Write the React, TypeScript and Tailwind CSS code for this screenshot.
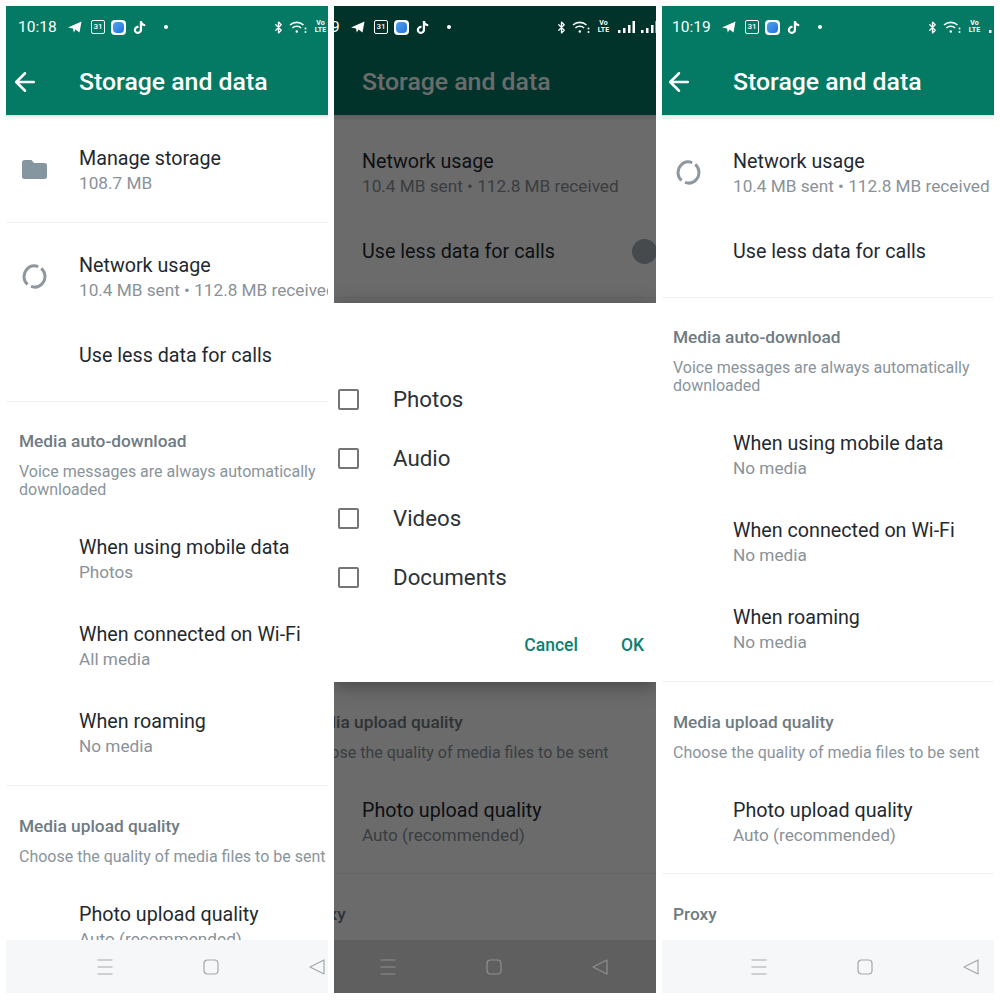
import { ArrowLeft, Bluetooth } from 'lucide-react';
import { FaTiktok } from 'react-icons/fa';

/* ------------------------------------------------------------------ */
/*  Status bar                                                         */
/* ------------------------------------------------------------------ */

function SignalBars() {
  return (
    <svg width="17" height="14" viewBox="0 0 17 14" fill="white">
      <rect x="0" y="10" width="2.5" height="3" />
      <rect x="5" y="8" width="2.5" height="5" />
      <rect x="10" y="5" width="2.5" height="8" />
      <rect x="14.5" y="1" width="2.5" height="12" />
    </svg>
  );
}

function StatusBar({ time }: { time: string }) {
  return (
    <div className="relative z-20 flex h-[42px] w-[406px] items-center pl-[10px] text-white">
      <span className="mt-[1px] w-[39px] text-[15.500px]">{time}</span>
      <svg className="ml-[11px]" width="14" height="12" viewBox="0 0 14 12" fill="white">
        <path d="M0 6.500 13.500 0.500 11.500 11.500 7.500 8.600 5.800 11.500 5 7.600 Z" />
      </svg>
      <div className="ml-[9px] flex h-[14px] w-[14px] items-center justify-center rounded-[2px] border border-white text-[8px] font-medium leading-none">
        31
      </div>
      <div className="ml-[6px] flex h-[15px] w-[15px] items-center justify-center rounded-[4px] bg-white">
        <div className="h-[11px] w-[11px] rounded-[4px] bg-linear-to-br from-[#4da3f0] to-[#2a6fe0]" />
      </div>
      <FaTiktok className="ml-[7px]" size={13} color="white" />
      <div className="ml-[18px] h-[4px] w-[4px] rounded-full bg-white" />
      <Bluetooth className="ml-[104px]" size={13} strokeWidth={2.4} />
      <svg className="ml-[4px]" width="18" height="14" viewBox="0 0 18 14" fill="none" stroke="white" strokeWidth="1.600">
        <path d="M1 5a10 10 0 0 1 13.500 0" />
        <path d="M3.400 8a6.400 6.400 0 0 1 8.700 0" />
        <circle cx="7.800" cy="11.500" r="1.200" fill="white" stroke="none" />
        <circle cx="16.500" cy="12" r="1" fill="white" stroke="none" />
        <circle cx="16.500" cy="8.500" r="1" fill="white" stroke="none" />
      </svg>
      <div className="ml-[6px] flex w-[15px] flex-col items-center text-[7px] font-bold leading-[7px]">
        <span>Vo</span>
        <span>LTE</span>
      </div>
      <div className="ml-[7px]">
        <SignalBars />
      </div>
      <div className="ml-[6px]">
        <SignalBars />
      </div>
    </div>
  );
}

/* ------------------------------------------------------------------ */
/*  List                                                               */
/* ------------------------------------------------------------------ */

function FolderIcon() {
  return (
    <svg width="25" height="21" viewBox="0 0 25 21" fill="#8696a0">
      <path d="M2.500 1h7l2.500 3h10.500a2.500 2.500 0 0 1 2.500 2.500v11a2.500 2.500 0 0 1-2.500 2.500h-20a2.500 2.500 0 0 1-2.500-2.500v-14a2.500 2.500 0 0 1 2.500-2.500z" />
    </svg>
  );
}

function UsageIcon() {
  return (
    <svg width="25" height="25" viewBox="0 0 25 25" fill="none" stroke="#8e979d" strokeWidth="3">
      <circle cx="12.500" cy="12.500" r="10.500" strokeDasharray="29 4" transform="rotate(-50 12.500 12.500)" />
    </svg>
  );
}

function Row({ title, sub, icon }: { title: string; sub: string; icon?: React.ReactNode }) {
  return (
    <div className="flex h-[87px] items-center">
      <div className="flex w-[71px] justify-center pb-[3px] pr-[18px]">{icon}</div>
      <div className="flex flex-col whitespace-nowrap">
        <span className="text-[19.700px] leading-[25px] text-[#1f2a30]">{title}</span>
        <span className="text-[17.200px] leading-[25px] text-[#8a9298]">{sub}</span>
      </div>
    </div>
  );
}

function Divider({ className }: { className: string }) {
  return <div className={`-ml-[10px] h-px bg-[#f0f1f2] ${className}`} />;
}

function SectionHead({ title, note }: { title: string; note: string }) {
  return (
    <div className="pl-[11px]">
      <div className="text-[17.300px] font-medium leading-[24px] text-[#6f7b82]">{title}</div>
      <div className="mt-[10px] w-[310px] text-[16px] leading-[18px] text-[#8a949b]">{note}</div>
    </div>
  );
}

function SettingsList({ scrollClass, media }: { scrollClass: string; media: string[] }) {
  return (
    <div className={scrollClass}>
      <div className="mt-[12px]">
        <Row title="Manage storage" sub="108.7 MB" icon={<FolderIcon />} />
      </div>
      <Divider className="mt-[8px]" />
      <div className="mt-[11px]">
        <Row title="Network usage" sub="10.4 MB sent • 112.8 MB received" icon={<UsageIcon />} />
      </div>
      <div className="flex h-[68px] items-center justify-between pl-[71px] pr-[40px]">
        <span className="mt-[1px] text-[19.700px] leading-[25px] text-[#1f2a30]">Use less data for calls</span>
        <div className="h-[25px] w-[25px] rounded-full bg-[#a9b0b8]" />
      </div>
      <Divider className="mt-[12px]" />

      <div className="mt-[27px]">
        <SectionHead title="Media auto-download" note="Voice messages are always automatically downloaded" />
      </div>
      <div className="mt-[17px]">
        <Row title="When using mobile data" sub={media[0]} />
        <Row title="When connected on Wi-Fi" sub={media[1]} />
        <Row title="When roaming" sub={media[2]} />
      </div>
      <Divider className="mt-[8px]" />

      <div className="mt-[28px]">
        <SectionHead title="Media upload quality" note="Choose the quality of media files to be sent" />
      </div>
      <div className="mt-[17px]">
        <Row title="Photo upload quality" sub="Auto (recommended)" />
      </div>
      <Divider className="mt-[7px]" />

      <div className="mt-[28px] pl-[11px] text-[17.300px] font-medium leading-[24px] text-[#6f7b82]">Proxy</div>
    </div>
  );
}

/* ------------------------------------------------------------------ */
/*  Screen                                                             */
/* ------------------------------------------------------------------ */

function NavBar({ dimmed }: { dimmed?: boolean }) {
  const stroke = dimmed ? '#8f8f8f' : '#a4a7ab';
  return (
    <div
      className={`-ml-[10px] flex h-[53px] w-[416px] shrink-0 items-center gap-[90px] pl-[99px] ${
        dimmed ? 'bg-[#e2e3e5]' : 'bg-[#f6f7f9]'
      }`}
    >
      <svg className="relative z-20" width="16" height="16" viewBox="0 0 16 16" stroke={stroke} strokeWidth="1.200">
        <path d="M0.500 1h15M0.500 8h15M0.500 15h15" />
      </svg>
      <svg className="relative z-20" width="16" height="16" viewBox="0 0 16 16" fill="none" stroke={stroke} strokeWidth="1.200">
        <rect x="1" y="1" width="14" height="14" rx="3.500" />
      </svg>
      <svg className="relative z-20" width="16" height="16" viewBox="0 0 16 16" fill="none" stroke={stroke} strokeWidth="1.200">
        <path d="M1 8 15 1v14z" strokeLinejoin="round" />
      </svg>
    </div>
  );
}

function Dialog() {
  const options = ['Photos', 'Audio', 'Videos', 'Documents'];
  return (
    <div className="absolute inset-x-0 top-[297px] z-30 h-[379px] bg-white pt-[67px] shadow-[0_4px_18px_rgba(0,0,0,0.35)]">
      {options.map((label) => (
        <div key={label} className="flex h-[59.300px] items-center pl-[4px]">
          <div className="h-[21px] w-[21px] rounded-[2px] border-2 border-[#757575]" />
          <span className="ml-[34px] text-[22.300px] text-[#2b3338]">{label}</span>
        </div>
      ))}
      <div className="mt-[26px] flex justify-end gap-[43px] pr-[12px] text-[17.500px] font-medium leading-[24px] text-[#0b8170]">
        <span>Cancel</span>
        <span>OK</span>
      </div>
    </div>
  );
}

interface ScreenProps {
  time: string;
  widthClass: string;
  shiftClass: string;
  scrollClass: string;
  media: string[];
  dimmed?: boolean;
}

function Screen({ time, widthClass, shiftClass, scrollClass, media, dimmed }: ScreenProps) {
  return (
    <div className={`relative h-[987px] shrink-0 overflow-hidden bg-white ${widthClass}`}>
      <div className={`flex h-full w-[416px] flex-col pl-[10px] ${shiftClass}`}>
        {/* Header */}
        <div className="relative -ml-[10px] h-[109px] w-[416px] shrink-0 bg-[#047a64] pl-[10px] shadow-[0_1px_4px_rgba(0,0,0,0.18)]">
          <StatusBar time={time} />
          <div className="flex h-[67px] items-center text-white">
            <ArrowLeft className="ml-[2px]" size={30} strokeWidth={2} />
            <span className="ml-[39px] whitespace-nowrap text-[24.800px] font-medium">Storage and data</span>
          </div>
        </div>

        {/* Scrolled settings */}
        <div className="-ml-[10px] min-h-0 flex-1 overflow-hidden pl-[10px]">
          <SettingsList scrollClass={scrollClass} media={media} />
        </div>

        <NavBar dimmed={dimmed} />
      </div>

      {dimmed && <div className="absolute inset-0 z-10 bg-black/[0.58]" />}
      {dimmed && <Dialog />}
    </div>
  );
}

export default function App() {
  return (
    <div className="flex h-[1000px] w-[1000px] gap-[6px] bg-white p-[6px] font-[Roboto,sans-serif]">
      <Screen
        time="10:18"
        widthClass="w-[322px]"
        shiftClass="-ml-[8px]"
        scrollClass="mt-0"
        media={['Photos', 'All media', 'No media']}
      />
      <Screen
        time="10:19"
        widthClass="w-[322px]"
        shiftClass="-ml-[53px]"
        scrollClass="-mt-[104px]"
        media={['No media', 'No media', 'No media']}
        dimmed
      />
      <Screen
        time="10:19"
        widthClass="w-[332px]"
        shiftClass="-ml-[10px]"
        scrollClass="-mt-[104px]"
        media={['No media', 'No media', 'No media']}
      />
    </div>
  );
}
